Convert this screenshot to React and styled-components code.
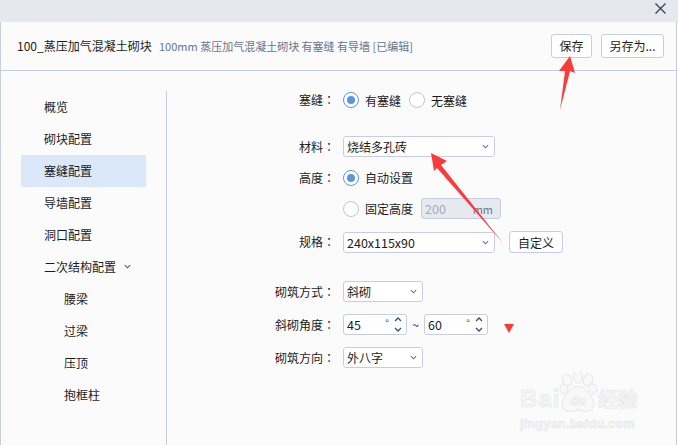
import React from 'react';
import styled, { createGlobalStyle } from 'styled-components';

const GlobalStyle = createGlobalStyle`
  html, body {
    margin: 0;
    padding: 0;
    background: #fbfbfc;
  }
  body {
    font-family: "Noto Sans CJK SC", "Liberation Sans", sans-serif;
    font-size: 12px;
    color: #222;
  }
`;

const Page = styled.div`
  position: relative;
  width: 678px;
  height: 445px;
  overflow: hidden;
`;

const TopBar = styled.div`
  display: flex;
  justify-content: flex-end;
  align-items: center;
  height: 22px;
  padding: 0 12px 6px 0;
  box-sizing: border-box;
  background: #e5e8ec;
`;

const Dialog = styled.div`
  display: flex;
  flex-direction: column;
  height: 423px;
  width: 677px;
  box-sizing: border-box;
  background: #fbfbfc;
  border-left: 1px solid #c6cee3;
  border-right: 1px solid #c6cee3;
`;

const Header = styled.div`
  display: flex;
  align-items: center;
  height: 49px;
  flex: none;
  box-sizing: border-box;
  padding: 0 12px 1px 16px;
  border-bottom: 1px solid #c6cee3;
`;

const Title = styled.div`
  font-size: 12px;
  color: #1c1c1c;
  width: 142px;
  white-space: nowrap;
`;

const SubTitle = styled.div`
  flex: 1;
  font-size: 11px;
  color: #66758c;
  white-space: nowrap;
`;

const Button = styled.div`
  display: flex;
  align-items: center;
  justify-content: center;
  box-sizing: border-box;
  width: ${p => p.$w}px;
  height: ${p => p.$h || 24}px;
  margin-left: ${p => p.$ml || 0}px;
  background: #fff;
  border: 1px solid #c6cee3;
  border-radius: 3px;
  font-size: 12px;
  color: #1c1c1c;
`;

const Body = styled.div`
  display: flex;
  flex: 1;
  padding-top: 20px;
  min-height: 0;
`;

const Sidebar = styled.div`
  width: 166px;
  flex: none;
  box-sizing: border-box;
  padding-left: 20px;
  border-right: 1px solid #c6cee3;
`;

const NavItem = styled.div`
  display: flex;
  align-items: center;
  gap: 8px;
  width: 125px;
  height: 32px;
  box-sizing: border-box;
  padding-left: ${p => (p.$sub ? 43 : 23)}px;
  padding-bottom: 1px;
  background: ${p => (p.$active ? '#dbe8f9' : 'transparent')};
  color: #1c1c1c;
  font-size: 12px;
`;

const Form = styled.div`
  flex: 1;
`;

const Row = styled.div`
  display: grid;
  grid-template-columns: 168px 1fr;
  column-gap: 8px;
  align-items: center;
  height: ${p => p.$h}px;
  margin-top: ${p => p.$mt || 0}px;
`;

const Label = styled.div`
  text-align: right;
  font-size: 12px;
  color: #1c1c1c;
  padding-bottom: 1px;
`;

const Colon = styled.span`
  font-family: "Noto Sans CJK TC", sans-serif;
`;

const Controls = styled.div`
  display: flex;
  align-items: center;
`;

const RadioOption = styled.div`
  display: flex;
  align-items: center;
  gap: 6px;
  margin-right: ${p => p.$mr || 0}px;
  font-size: 12px;
  color: #1c1c1c;
`;

const RadioDot = styled.span`
  display: block;
  box-sizing: border-box;
  width: 16px;
  height: 16px;
  border-radius: 50%;
  background: #fff;
  border: 1px solid ${p => (p.$on ? '#5b96dd' : '#c4c4c4')};
  position: relative;
  &::after {
    content: '';
    display: ${p => (p.$on ? 'block' : 'none')};
    position: absolute;
    inset: 3px;
    border-radius: 50%;
    background: #5b96dd;
  }
`;

const Field = styled.div`
  display: flex;
  align-items: center;
  justify-content: space-between;
  box-sizing: border-box;
  width: ${p => p.$w}px;
  height: 21px;
  padding: 0 5px 0 3px;
  background: #fff;
  border: 1px solid #c6cee3;
  border-radius: 3px;
  font-size: 12px;
  color: #1c1c1c;
`;

const FixedField = styled(Field)`
  margin-left: 8px;
  background: #e6e9ee;
  color: #a3adbd;
  padding: 0 7px 0 3px;
`;

const Digits = styled.span`
  font-size: 12.5px;
`;

const Unit = styled.span`
  color: #6c7888;
  font-size: 11px;
`;

const Degree = styled.span`
  color: #4d5d75;
  font-size: 10px;
  margin-left: auto;
  margin-right: 5px;
  margin-top: -5px;
`;

const Spinner = styled.div`
  display: flex;
  flex-direction: column;
  gap: 5px;
  margin-right: -1px;
`;

const Tilde = styled.span`
  width: 17px;
  text-align: center;
  color: #1c1c1c;
`;

const Overlay = styled.svg`
  position: absolute;
  left: 0;
  top: 0;
  pointer-events: none;
`;

const Watermark = styled.div`
  position: absolute;
  left: 520px;
  top: 372px;
  width: 130px;
  color: #f5f5f6;
  font-family: "Liberation Sans", sans-serif;
  font-weight: 700;
  -webkit-text-stroke: 0.6px #e7e7e9;
`;

const WmPaw = styled.svg`
  position: absolute;
  left: 0;
  top: 0;
`;

const WmBai = styled.div`
  position: absolute;
  left: 0;
  top: 14px;
  font-size: 24px;
  line-height: 26px;
  letter-spacing: 1px;
`;

const WmDu = styled.div`
  position: absolute;
  left: 50px;
  top: 22px;
  font-size: 13px;
  line-height: 14px;
`;

const WmCn = styled.div`
  position: absolute;
  left: 78px;
  top: 14px;
  font-family: "Noto Sans CJK SC", sans-serif;
  font-size: 20px;
  line-height: 26px;
  white-space: nowrap;
  letter-spacing: -0.5px;
`;

const WmUrl = styled.div`
  position: absolute;
  left: 0;
  top: 45px;
  font-size: 12.5px;
  line-height: 14px;
  white-space: nowrap;
  letter-spacing: 0.3px;
`;

const Chevron = ({ up, color = '#6d7888', w = 7 }) => (
  <svg width={w} height="5" viewBox="0 0 8 5" fill="none">
    <path d={up ? 'M1 4 L4 1 L7 4' : 'M1 1 L4 4 L7 1'} stroke={color} strokeWidth="1.3" />
  </svg>
);

const Select = ({ w, children }) => (
  <Field $w={w}>
    <span>{children}</span>
    <Chevron />
  </Field>
);

const NumberField = ({ value }) => (
  <Field $w={64}>
    <Digits>{value}</Digits>
    <Degree>°</Degree>
    <Spinner>
      <Chevron up color="#3f4d60" w={8} />
      <Chevron color="#3f4d60" w={8} />
    </Spinner>
  </Field>
);

const Radio = ({ on, mr, children }) => (
  <RadioOption $mr={mr}>
    <RadioDot $on={on} />
    {children}
  </RadioOption>
);

const FormLabel = ({ children }) => (
  <Label>{children}<Colon>：</Colon></Label>
);

const navItems = ['概览', '砌块配置', '塞缝配置', '导墙配置', '洞口配置'];
const subItems = ['腰梁', '过梁', '压顶', '抱框柱'];

export default function App() {
  return (
    <Page>
      <GlobalStyle />
      <TopBar>
        <svg width="11" height="11" viewBox="0 0 11 11" fill="none">
          <path d="M0.5 0.5 L10.5 10.5 M10.5 0.5 L0.5 10.5" stroke="#37475a" strokeWidth="1.4" />
        </svg>
      </TopBar>
      <Dialog>
        <Header>
          <Title>100_蒸压加气混凝土砌块</Title>
          <SubTitle>100mm 蒸压加气混凝土砌块 有塞缝 有导墙 [已编辑]</SubTitle>
          <Button $w={41}>保存</Button>
          <Button $w={63} $ml={9}>另存为...</Button>
        </Header>
        <Body>
          <Sidebar>
            {navItems.map(item => (
              <NavItem key={item} $active={item === '塞缝配置'}>{item}</NavItem>
            ))}
            <NavItem>
              二次结构配置
              <Chevron color="#4d5d75" />
            </NavItem>
            {subItems.map(item => (
              <NavItem key={item} $sub>{item}</NavItem>
            ))}
          </Sidebar>
          <Form>
            <Row $h={18}>
              <FormLabel>塞缝</FormLabel>
              <Controls>
                <Radio on mr={8}>有塞缝</Radio>
                <Radio>无塞缝</Radio>
              </Controls>
            </Row>
            <Row $h={21} $mt={27}>
              <FormLabel>材料</FormLabel>
              <Controls><Select w={152}>烧结多孔砖</Select></Controls>
            </Row>
            <Row $h={21} $mt={10}>
              <FormLabel>高度</FormLabel>
              <Controls><Radio on>自动设置</Radio></Controls>
            </Row>
            <Row $h={21} $mt={10}>
              <span />
              <Controls>
                <Radio>固定高度</Radio>
                <FixedField $w={80}>
                  <Digits>200</Digits>
                  <Unit>mm</Unit>
                </FixedField>
              </Controls>
            </Row>
            <Row $h={21} $mt={12}>
              <FormLabel>规格</FormLabel>
              <Controls>
                <Select w={152}><Digits>240x115x90</Digits></Select>
                <Button $w={54} $h={22} $ml={14}>自定义</Button>
              </Controls>
            </Row>
            <Row $h={21} $mt={29}>
              <FormLabel>砌筑方式</FormLabel>
              <Controls><Select w={80}>斜砌</Select></Controls>
            </Row>
            <Row $h={21} $mt={12}>
              <FormLabel>斜砌角度</FormLabel>
              <Controls>
                <NumberField value="45" />
                <Tilde>~</Tilde>
                <NumberField value="60" />
              </Controls>
            </Row>
            <Row $h={21} $mt={12}>
              <FormLabel>砌筑方向</FormLabel>
              <Controls><Select w={80}>外八字</Select></Controls>
            </Row>
          </Form>
        </Body>
      </Dialog>

      <Watermark>
        <WmPaw width="130" height="50" viewBox="0 0 130 50">
          <g fill="#f8f8f9" stroke="#e7e7e9" strokeWidth="1">
            <ellipse cx="47" cy="8" rx="4.5" ry="6" transform="rotate(-20 47 8)" />
            <ellipse cx="58" cy="5" rx="4.5" ry="6" />
            <ellipse cx="68" cy="8" rx="4.5" ry="6" transform="rotate(20 68 8)" />
            <ellipse cx="44" cy="17" rx="4" ry="5" />
            <ellipse cx="73" cy="17" rx="4" ry="5" />
            <path d="M58 14 C66 14 74 28 74 32 C74 41 65 40 58 38 C51 40 42 41 42 32 C42 28 50 14 58 14 Z" />
          </g>
        </WmPaw>
        <WmBai>Bai</WmBai>
        <WmDu>du</WmDu>
        <WmCn>经验</WmCn>
        <WmUrl>jingyan.baidu.com</WmUrl>
      </Watermark>

      <Overlay width="678" height="445" viewBox="0 0 678 445">
        <polygon points="570,56 575,73 570,71 560,110 565,71 559,71" fill="#fb3a3a" />
        <polygon points="431,153 447,161 441,165 503,243 437,168 434,171" fill="#fb3a3a" />
        <polygon points="504,324 514,324 509,333" fill="#fb3a3a" />
      </Overlay>
    </Page>
  );
}
